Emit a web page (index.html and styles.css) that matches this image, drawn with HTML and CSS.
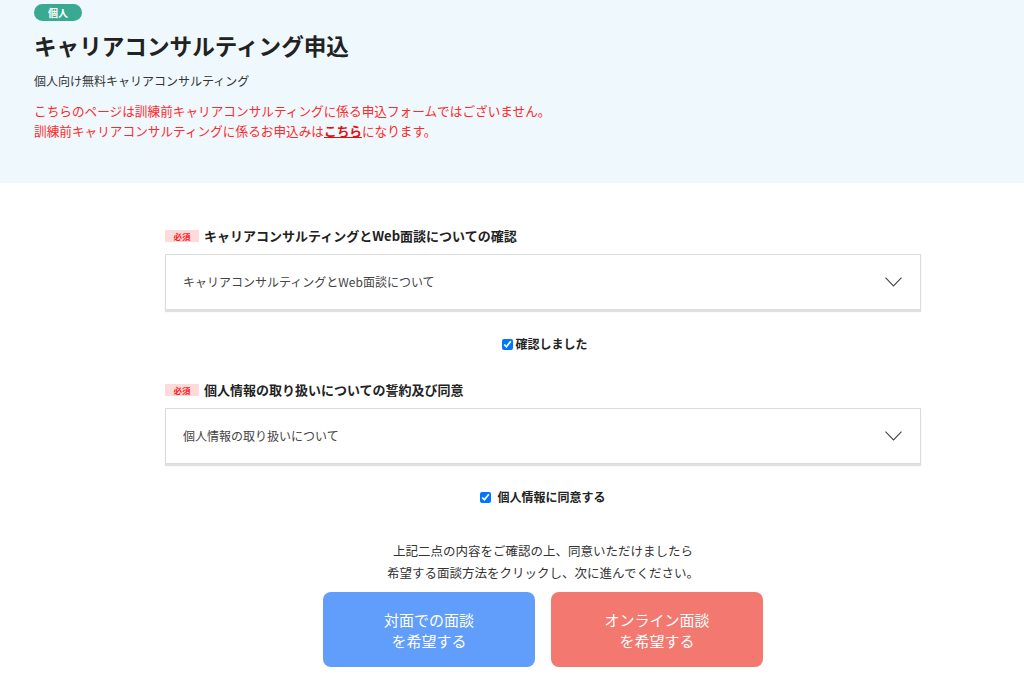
FILE: index.html
```html
<!DOCTYPE html>
<html lang="ja">
<head>
<meta charset="utf-8">
<title>キャリアコンサルティング申込</title>
<link rel="stylesheet" href="styles.css">
</head>
<body>
<header class="hero">
  <span class="tag">個人</span>
  <h1 class="title">キャリアコンサルティング申込</h1>
  <p class="subtitle">個人向け無料キャリアコンサルティング</p>
  <p class="notice">こちらのページは訓練前キャリアコンサルティングに係る申込フォームではございません。<br>訓練前キャリアコンサルティングに係るお申込みは<a class="notice-link" href="#">こちら</a>になります。</p>
</header>
<main class="main">
  <section class="field">
    <div class="field-label"><span class="req">必須</span><span class="field-name">キャリアコンサルティングとWeb面談についての確認</span></div>
    <div class="accordion">
      <span class="accordion-text">キャリアコンサルティングとWeb面談について</span>
      <svg class="chevron" width="17" height="10" viewBox="0 0 17 10"><path d="M0.5 0.7 L8.5 9 L16.5 0.7" fill="none" stroke="#444" stroke-width="1.1"/></svg>
    </div>
    <label class="check check-a"><input type="checkbox" checked><span>確認しました</span></label>
  </section>
  <section class="field field-2">
    <div class="field-label"><span class="req">必須</span><span class="field-name">個人情報の取り扱いについての誓約及び同意</span></div>
    <div class="accordion">
      <span class="accordion-text">個人情報の取り扱いについて</span>
      <svg class="chevron" width="17" height="10" viewBox="0 0 17 10"><path d="M0.5 0.7 L8.5 9 L16.5 0.7" fill="none" stroke="#444" stroke-width="1.1"/></svg>
    </div>
    <label class="check check-b"><input type="checkbox" checked><span>個人情報に同意する</span></label>
  </section>
  <p class="guide">上記二点の内容をご確認の上、同意いただけましたら<br>希望する面談方法をクリックし、次に進んでください。</p>
  <div class="buttons">
    <a class="btn btn-blue" href="#">対面での面談<br>を希望する</a>
    <a class="btn btn-red" href="#">オンライン面談<br>を希望する</a>
  </div>
</main>
</body>
</html>
```

FILE: styles.css
```css
* { box-sizing: border-box; }
html, body { margin: 0; padding: 0; }
body {
  font-family: "Noto Sans CJK JP", "Noto Sans", sans-serif;
  color: #333;
  background: #fff;
  width: 1024px;
  height: 677px;
  overflow: hidden;
}
.hero {
  background: #eef8fd;
  padding: 4px 34px 42px;
}
.tag {
  display: block;
  width: 48px;
  height: 17px;
  line-height: 17px;
  border-radius: 9px;
  background: #3aa991;
  color: #fff;
  font-size: 10px;
  font-weight: 700;
  text-align: center;
}
.title {
  margin: 10px 0 0;
  font-size: 22.6px;
  line-height: 30px;
  font-weight: 700;
  color: #222;
}
.subtitle {
  margin: 10px 0 0;
  font-size: 12px;
  line-height: 20px;
  color: #333;
}
.notice {
  margin: 10px 0 0;
  font-size: 12.65px;
  line-height: 20px;
  color: #ff2a2a;
}
.notice-link {
  color: #e01010;
  font-weight: 700;
  text-decoration: underline;
}
.main {
  width: 756px;
  margin-left: 165px;
  padding-top: 43px;
}
.field-label {
  display: flex;
  align-items: center;
  height: 20px;
}
.req {
  display: block;
  width: 34px;
  height: 12px;
  line-height: 12px;
  background: #ffdada;
  color: #ff2020;
  font-size: 8.5px;
  font-weight: 700;
  text-align: center;
  margin-right: 5px;
}
.field-name {
  font-size: 13px;
  font-weight: 700;
  color: #222;
  line-height: 20px;
}
.accordion {
  margin-top: 8px;
  height: 56px;
  border: 1px solid #dcdcdc;
  box-shadow: 0 2px 1px rgba(0, 0, 0, 0.12);
  display: flex;
  align-items: center;
  justify-content: space-between;
  padding: 0 18px 0 17px;
  background: #fff;
}
.accordion-text {
  font-size: 12px;
  color: #444;
  line-height: 20px;
}
.chevron { display: block; }
.check {
  display: flex;
  justify-content: center;
  align-items: center;
  height: 20px;
  font-size: 12px;
  font-weight: 700;
  color: #222;
  line-height: 20px;
}
.check input {
  width: 11px;
  height: 11px;
  margin: 0;
}
.check-a { margin-top: 24px; padding-left: 4px; }
.check-a input { margin-right: 2px; }
.check-b { margin-top: 23px; }
.check-b input { margin-right: 6px; }
.field-2 { margin-top: 26px; }
.guide {
  margin: 33px 0 0;
  text-align: center;
  font-size: 12.5px;
  line-height: 22px;
  color: #333;
}
.buttons {
  margin-top: 8px;
  display: flex;
  justify-content: center;
  gap: 16px;
}
.btn {
  width: 212px;
  height: 75px;
  border-radius: 8px;
  display: flex;
  align-items: center;
  justify-content: center;
  text-align: center;
  color: #fff;
  font-size: 15px;
  line-height: 21px;
  text-decoration: none;
}
.btn-blue { background: #619dfb; }
.btn-red { background: #f3786f; }
```
